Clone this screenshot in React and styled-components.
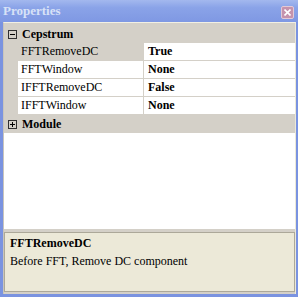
import React from "react";
import styled, { createGlobalStyle } from "styled-components";

const Global = createGlobalStyle`
  html, body { margin: 0; padding: 0; }
  body { font-family: "Liberation Serif", "Times New Roman", serif; }
`;

const GRAY = "#d4d0c8";

const Window = styled.div`
  width: 298px;
  height: 297px;
  box-sizing: border-box;
  display: flex;
  flex-direction: column;
  background: #7a93e0;
  overflow: hidden;
`;

const TitleBar = styled.div`
  height: 22px;
  flex: none;
  display: flex;
  align-items: center;
  justify-content: space-between;
  padding: 0 4px 0 3px;
  background: linear-gradient(180deg, #a3b8ee 0%, #8aa3e8 35%, #7f98e3 100%);
`;

const Title = styled.span`
  font-family: "Liberation Serif", serif;
  font-weight: bold;
  font-size: 13px;
  color: #d8e2f7;
  letter-spacing: 0;
`;

const CloseButton = styled.div`
  width: 11px;
  height: 11px;
  border: 1px solid #e3c9d6;
  border-radius: 2px;
  background: #c593ad;
  display: flex;
  align-items: center;
  justify-content: center;
  margin-top: 2px;
`;

const Body = styled.div`
  flex: 1;
  display: flex;
  flex-direction: column;
  margin: 0 2px 3px 3px;
  background: ${GRAY};
  border-top: 1px solid #f2f0e4;
  border-left: 1px solid #c9c5bb;
  border-right: 1px solid #ece9d8;
  min-height: 0;
`;

const Grid = styled.div`
  height: 206px;
  flex: none;
  background: #ffffff;
  border-top: 2px solid ${GRAY};
  box-sizing: border-box;
  display: flex;
  flex-direction: column;
`;

const CategoryRow = styled.div`
  height: 18px;
  flex: none;
  display: grid;
  grid-template-columns: 14px 1fr;
  background: ${GRAY};
  align-items: center;
`;

const Toggle = styled.div`
  width: 7px;
  height: 7px;
  border: 1px solid #303030;
  justify-self: center;
  margin-left: 3px;
  position: relative;
  &::before {
    content: "";
    position: absolute;
    left: 1px;
    right: 1px;
    top: 3px;
    height: 1px;
    background: #000;
  }
  &::after {
    content: "";
    display: ${(p) => (p.$open ? "none" : "block")};
    position: absolute;
    top: 1px;
    bottom: 1px;
    left: 3px;
    width: 1px;
    background: #000;
  }
`;

const CategoryName = styled.span`
  font-weight: bold;
  font-size: 12px;
  padding-left: 4px;
  color: #000;
`;

const PropRow = styled.div`
  height: 18px;
  flex: none;
  display: grid;
  grid-template-columns: 14px 126px 1fr;
`;

const Gutter = styled.div`
  background: ${GRAY};
`;

const NameCell = styled.div`
  background: ${(p) => (p.$selected ? GRAY : "#ffffff")};
  border-bottom: 1px solid ${GRAY};
  border-right: 1px solid ${GRAY};
  font-size: 12px;
  padding-left: 3px;
  display: flex;
  align-items: center;
  color: #000;
  white-space: nowrap;
`;

const ValueCell = styled.div`
  background: #ffffff;
  border-bottom: 1px solid ${GRAY};
  font-size: 12px;
  font-weight: bold;
  padding-left: 4px;
  display: flex;
  align-items: center;
  color: #000;
`;

const Splitter = styled.div`
  height: 3px;
  flex: none;
  background: ${GRAY};
`;

const Description = styled.div`
  height: 60px;
  flex: none;
  box-sizing: border-box;
  border: 1px solid #aca899;
  background: #ece9d8;
  padding: 3px 5px;
  display: flex;
  flex-direction: column;
  gap: 4px;
`;

const DescTitle = styled.div`
  font-weight: bold;
  font-size: 12px;
  color: #000;
  line-height: 14px;
`;

const DescText = styled.div`
  font-size: 12px;
  color: #000;
  line-height: 14px;
`;

const props = [
  { name: "FFTRemoveDC", value: "True", selected: true },
  { name: "FFTWindow", value: "None" },
  { name: "IFFTRemoveDC", value: "False" },
  { name: "IFFTWindow", value: "None" },
];

export default function App() {
  return (
    <>
      <Global />
      <Window>
        <TitleBar>
          <Title>Properties</Title>
          <CloseButton>
            <svg width="7" height="7" viewBox="0 0 7 7">
              <path d="M0.5 0.5 L6.5 6.5 M6.5 0.5 L0.5 6.5" stroke="#ffffff" strokeWidth="1.6" />
            </svg>
          </CloseButton>
        </TitleBar>
        <Body>
          <Grid>
            <CategoryRow>
              <Toggle $open />
              <CategoryName>Cepstrum</CategoryName>
            </CategoryRow>
            {props.map((p) => (
              <PropRow key={p.name}>
                <Gutter />
                <NameCell $selected={p.selected}>{p.name}</NameCell>
                <ValueCell>{p.value}</ValueCell>
              </PropRow>
            ))}
            <CategoryRow>
              <Toggle />
              <CategoryName>Module</CategoryName>
            </CategoryRow>
          </Grid>
          <Splitter />
          <Description>
            <DescTitle>FFTRemoveDC</DescTitle>
            <DescText>Before FFT, Remove DC component</DescText>
          </Description>
        </Body>
      </Window>
    </>
  );
}
